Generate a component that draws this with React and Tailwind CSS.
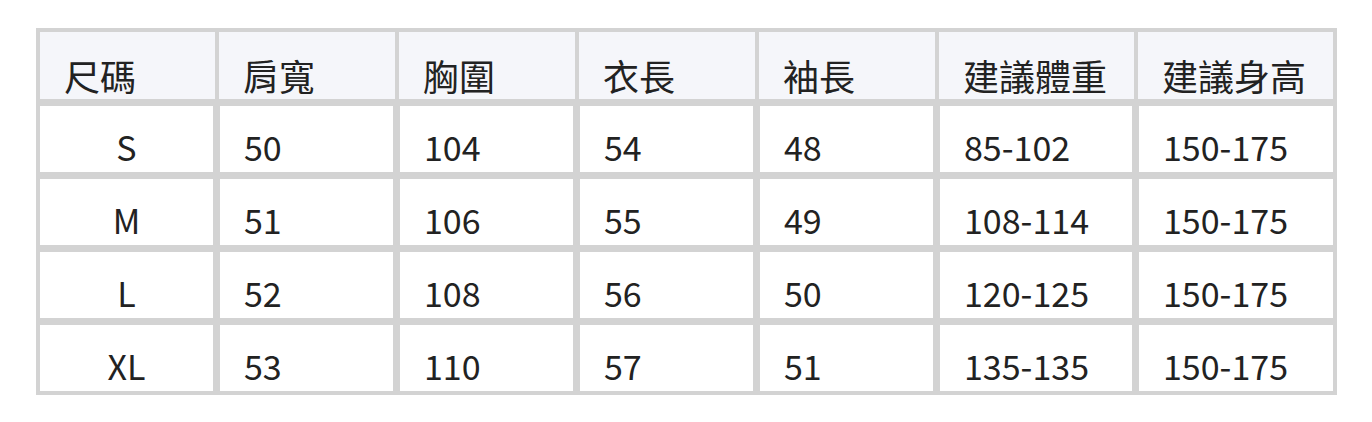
import React from "react";

const headers = ["尺碼", "肩寬", "胸圍", "衣長", "袖長", "建議體重", "建議身高"];
const rows = [
  ["S", "50", "104", "54", "48", "85-102", "150-175"],
  ["M", "51", "106", "55", "49", "108-114", "150-175"],
  ["L", "52", "108", "56", "50", "120-125", "150-175"],
  ["XL", "53", "110", "57", "51", "135-135", "150-175"],
];
const headW = ["w-[175px]", "w-[176px]", "w-[176px]", "w-[176px]", "w-[176px]", "w-[195px]", "w-[195px]"];
const bodyW = ["w-[173px]", "w-[173px]", "w-[173px]", "w-[173px]", "w-[173px]", "w-[192px]", "w-[194px]"];

export default function App() {
  return (
    <div className="min-h-screen bg-white pt-[28px] pl-[36px]" style={{ fontFamily: '"Noto Sans CJK TC", "Noto Sans", sans-serif' }}>
      <div className="w-[1301px] bg-[#d3d3d3] p-[4px] text-[#222222] text-[34px] leading-[34px]">
        <div className="flex gap-[4px]">
          {headers.map((h, i) => (
            <div key={h} className={`${headW[i]} h-[67px] bg-[#f5f6fa] pl-[24px] pt-[25px] text-[36px] leading-[36px]`}>
              {h}
            </div>
          ))}
        </div>
        {rows.map((r, ri) => (
          <div key={ri} className="flex gap-[7px] mt-[7px]">
            {r.map((c, i) => (
              <div
                key={i}
                className={`${bodyW[i]} h-[66px] bg-white pt-[24px] ${i === 0 ? "text-center" : "pl-[24px]"}`}
              >
                {c}
              </div>
            ))}
          </div>
        ))}
      </div>
    </div>
  );
}
